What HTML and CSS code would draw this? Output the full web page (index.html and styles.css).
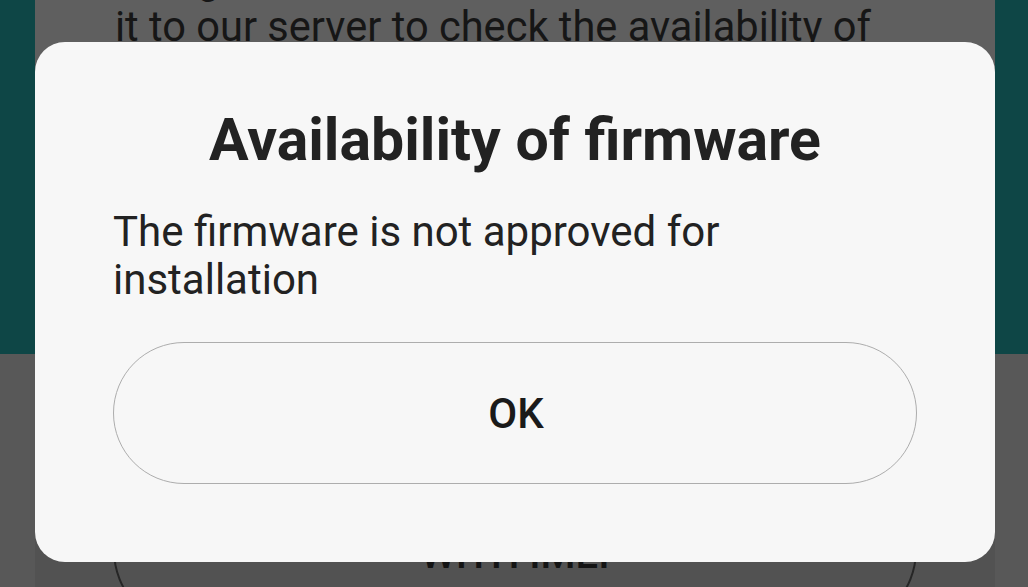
FILE: index.html
```html
<!DOCTYPE html>
<html lang="en">
<head>
<meta charset="utf-8">
<title>Availability of firmware</title>
<link rel="stylesheet" href="styles.css">
</head>
<body>
<div class="screen">
  <div class="card">
    <p class="card-text">Using this function will read firmware info and send<br>it to our server to check the availability of</p>
    <div class="card-actions">
      <div class="pill">CHECK FIRMWARE<br>WITH IMEI</div>
    </div>
  </div>

  <div class="overlay">
    <div class="dialog" role="dialog">
      <h1 class="dialog-title">Availability of firmware</h1>
      <p class="dialog-body">The firmware is not approved for installation</p>
      <button class="dialog-btn" type="button">OK</button>
    </div>
  </div>
</div>
</body>
</html>
```
FILE: styles.css
```css
html, body {
  margin: 0;
  padding: 0;
}

body {
  font-family: Roboto, "Noto Sans", "Liberation Sans", sans-serif;
  background: #585858;
}

.screen {
  position: relative;
  width: 1028px;
  height: 587px;
  overflow: hidden;
  background: linear-gradient(#0e4646 0, #0e4646 354px, #585858 354px, #585858 100%);
}

.card {
  margin: 0 33px 0 35px;
  height: 100%;
  background: #5f5f5f;
  display: flex;
  flex-direction: column;
}

.card-text {
  margin: -45px 0 0 0;
  padding: 0 0 0 80px;
  font-size: 41.6px;
  line-height: 48px;
  color: #161616;
  white-space: nowrap;
}

.card-actions {
  margin-top: 369px;
  flex: 1;
  background: #525252;
  padding: 50px 78px 0 78px;
}

.pill {
  box-sizing: border-box;
  height: 160px;
  border: 2px solid #262626;
  border-radius: 80px;
  padding-top: 11px;
  text-align: center;
  font-size: 40px;
  line-height: 48px;
  font-weight: 500;
  color: #141414;
  white-space: nowrap;
}

.overlay {
  position: absolute;
  inset: 0;
  display: flex;
  justify-content: flex-start;
  align-items: flex-start;
  padding: 42px 0 0 35px;
}

.dialog {
  box-sizing: border-box;
  width: 960px;
  height: 520px;
  background: #f7f7f7;
  border-radius: 30px;
  padding: 62px 78px 78px 78px;
  display: flex;
  flex-direction: column;
}

.dialog-title {
  margin: 0;
  text-align: center;
  font-size: 59px;
  line-height: 72px;
  font-weight: 700;
  color: #222222;
}

.dialog-body {
  margin: 32px 0 0 0;
  max-width: 720px;
  font-size: 42px;
  line-height: 48px;
  font-weight: 400;
  color: #222222;
}

.dialog-btn {
  margin-top: 38px;
  height: 142px;
  width: 100%;
  box-sizing: border-box;
  border: 1.5px solid #adadad;
  border-radius: 71px;
  background: transparent;
  font-family: Roboto, "Noto Sans", "Liberation Sans", sans-serif;
  font-size: 42px;
  font-weight: 500;
  color: #1a1a1a;
  padding: 0 0 0 2px;
  display: flex;
  align-items: center;
  justify-content: center;
}
```
